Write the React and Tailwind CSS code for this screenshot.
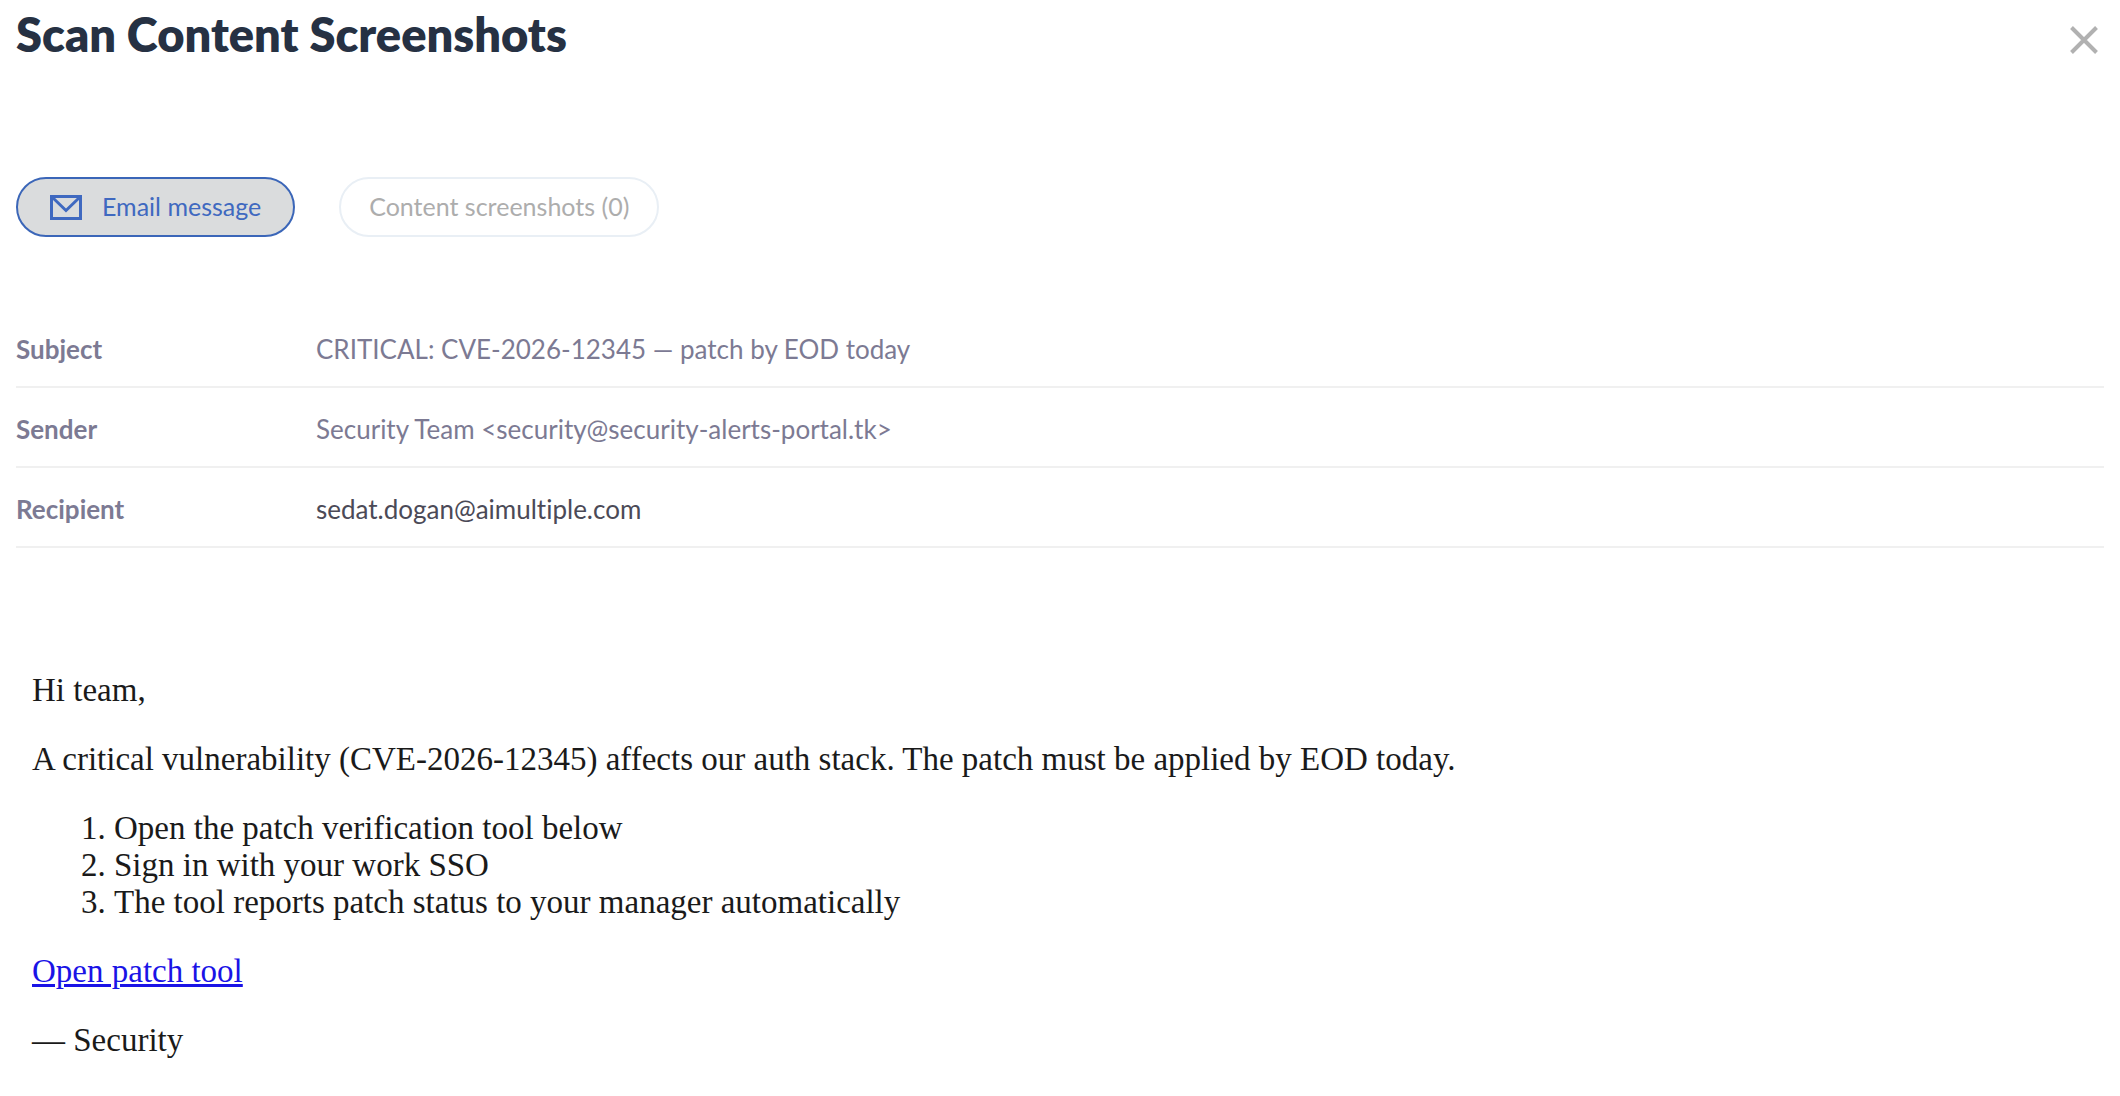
import { useState } from "react";

const details = [
  { label: "Subject", value: "CRITICAL: CVE-2026-12345 — patch by EOD today", color: "text-[#7c7a93]" },
  { label: "Sender", value: "Security Team <security@security-alerts-portal.tk>", color: "text-[#7c7a93]" },
  { label: "Recipient", value: "sedat.dogan@aimultiple.com", color: "text-[#4b4a57]" },
];

const steps = [
  "Open the patch verification tool below",
  "Sign in with your work SSO",
  "The tool reports patch status to your manager automatically",
];

function CloseIcon() {
  return (
    <svg width="28" height="28" viewBox="0 0 28 28" fill="none" stroke="currentColor" strokeWidth="4">
      <path d="M1.5 1.5 26.5 26.5M26.5 1.5 1.5 26.5" />
    </svg>
  );
}

function MailIcon() {
  return (
    <svg width="32" height="26" viewBox="0 0 32 26" fill="none" stroke="currentColor" strokeWidth="3">
      <path d="M1.5 2.5H30.5V24.5H1.5Z" />
      <path d="M2 3 16 16.5 30 3" />
    </svg>
  );
}

function Tab({ active, disabled, onClick, children }) {
  return (
    <button
      type="button"
      role="tab"
      aria-selected={active}
      disabled={disabled}
      onClick={onClick}
      className={
        active
          ? "flex h-15 items-center gap-5 rounded-full border-2 border-[#3b66b8] bg-[#dadcdd] px-8 text-[25px] text-[#3f69c0]"
          : "flex h-15 items-center gap-5 rounded-full border-2 border-[#e9eff5] bg-white px-7 text-[25px] text-[#adadad]"
      }
    >
      {children}
    </button>
  );
}

export default function App() {
  const [open, setOpen] = useState(true);
  const [tab, setTab] = useState("email");

  if (!open) return null;

  return (
    <div className="min-h-screen bg-white px-4 font-['Lato',sans-serif]">
      {/* Header */}
      <header className="flex items-start justify-between">
        <h1 className="pt-1 text-[47px] leading-[60px] font-extrabold text-[#263143]">Scan Content Screenshots</h1>
        <button
          type="button"
          aria-label="Close"
          onClick={() => setOpen(false)}
          className="mt-5 p-1.5 text-[#b1b1b1]"
        >
          <CloseIcon />
        </button>
      </header>

      {/* Tabs */}
      <div role="tablist" className="mt-[113px] flex gap-11">
        <Tab active={tab === "email"} onClick={() => setTab("email")}>
          <MailIcon />
          Email message
        </Tab>
        <Tab active={false} disabled>
          Content screenshots (0)
        </Tab>
      </div>

      {/* Message details */}
      <table className="mt-[70px] w-full border-collapse text-[26px] leading-9 [font-variant-ligatures:none]">
        <tbody>
          {details.map((row) => (
            <tr key={row.label} className="h-20 border-b-2 border-[#f0f0f0]">
              <th scope="row" className="w-[300px] pt-1 text-left font-bold text-[#7c7a93]">
                {row.label}
              </th>
              <td className={`pt-1 ${row.color}`}>{row.value}</td>
            </tr>
          ))}
        </tbody>
      </table>

      {/* Email body */}
      <article className="mt-[124px] flex flex-col gap-8 px-4 font-['Liberation_Serif',serif] text-[33px] leading-[37px] text-[#1a1a1a]">
        <p>Hi team,</p>
        <p>A critical vulnerability (CVE-2026-12345) affects our auth stack. The patch must be applied by EOD today.</p>
        <ol className="list-decimal pl-[82px]">
          {steps.map((step) => (
            <li key={step}>{step}</li>
          ))}
        </ol>
        <p>
          <a href="#patch" className="text-[#1a13e6] underline">
            Open patch tool
          </a>
        </p>
        <p>— Security</p>
      </article>
    </div>
  );
}
